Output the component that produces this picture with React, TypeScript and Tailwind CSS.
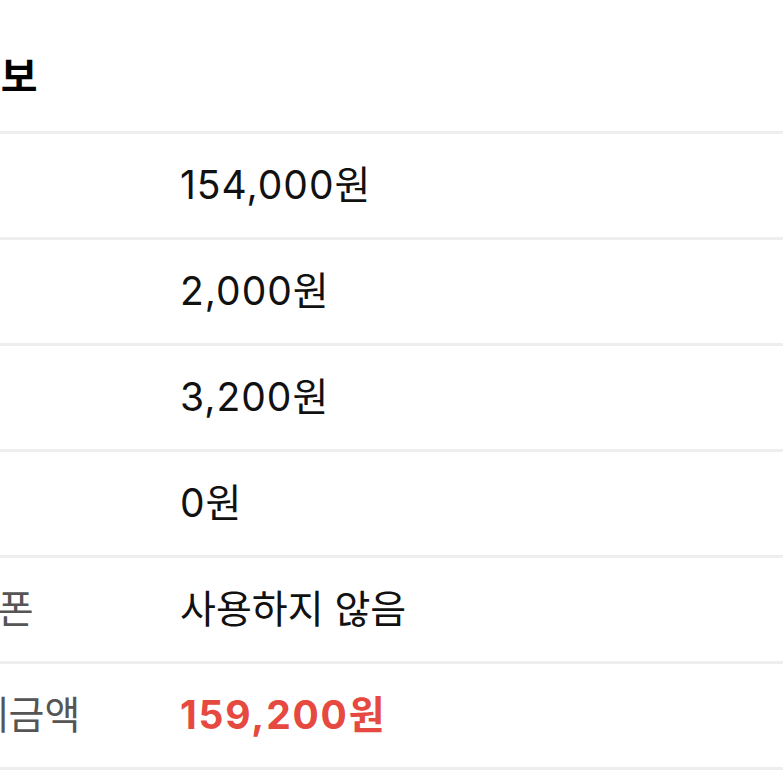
import React from 'react'

interface RowProps {
  label: string
  value: string
  highlight?: boolean
  numeric?: boolean
}

const rows: RowProps[] = [
  { label: '상품가', value: '154,000원', numeric: true },
  { label: '배송비', value: '2,000원', numeric: true },
  { label: '수수료', value: '3,200원', numeric: true },
  { label: '포인트', value: '0원', numeric: true },
  { label: '할인쿠폰', value: '사용하지 않음' },
  { label: '총 결제금액', value: '159,200원', highlight: true, numeric: true },
]

export default function App() {
  return (
    <div
      className="w-[783px] h-[783px] overflow-hidden bg-white text-black"
      style={{ fontFamily: "Inter, 'Noto Sans CJK KR', sans-serif" }}
    >
      <div className="-ml-[110px]">
        <div className="h-[131px] pt-[55px]">
          <h2 className="-ml-[9px] text-[40px] leading-[44px] font-bold whitespace-nowrap">결제 정보</h2>
        </div>
        {rows.map((row) => (
          <Row key={row.label} {...row} />
        ))}
        <div className="border-t-[3px] border-[#eeeeee]" />
      </div>
    </div>
  )
}

function Row({ label, value, highlight, numeric }: RowProps) {
  let valueClass = 'text-[39px] text-[#111111] whitespace-nowrap'
  if (highlight) valueClass = 'text-[39px] font-bold text-[#e5493f] whitespace-nowrap tracking-[1.8px]'
  else if (numeric) valueClass = 'text-[39px] text-[#111111] whitespace-nowrap tracking-[1px]'

  return (
    <div className="flex items-center h-[106px] border-t-[3px] border-[#eeeeee]">
      <div className="w-[290px] shrink-0 text-[39px] text-[#555555] whitespace-nowrap">{label}</div>
      <div className={valueClass}>{value}</div>
    </div>
  )
}
